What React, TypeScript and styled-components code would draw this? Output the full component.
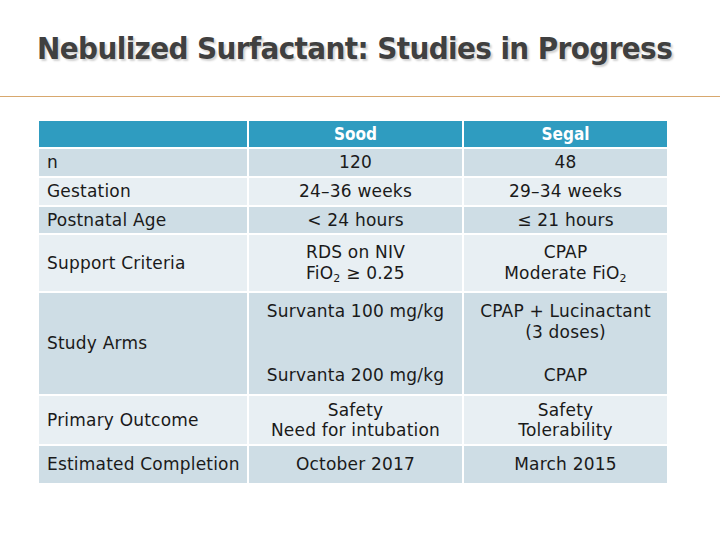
import React, { FC } from "react";
import styled, { createGlobalStyle } from "styled-components";

type Tone = "head" | "dark" | "light";

const GlobalStyle = createGlobalStyle`
  html, body {
    margin: 0;
    padding: 0;
    background: #ffffff;
  }
  body {
    font-family: "DejaVu Sans", "Liberation Sans", sans-serif;
    color: #1a1a1a;
  }
`;

const Page = styled.div`
  width: 720px;
  height: 540px;
  background: #ffffff;
  overflow: hidden;
`;

const Header = styled.div`
  height: 97px;
  box-sizing: border-box;
  border-bottom: 1px solid #d8a86e;
  padding: 29px 0 0 37px;
`;

const Title = styled.h1`
  margin: 0;
  font-family: "DejaVu Sans Condensed", "DejaVu Sans", sans-serif;
  font-stretch: condensed;
  font-weight: bold;
  font-size: 31px;
  line-height: 38px;
  letter-spacing: -0.6px;
  color: #404040;
  text-shadow: 2px 2px 2px rgba(0, 0, 0, 0.18);
  white-space: nowrap;
`;

const Table = styled.div`
  margin: 24px 0 0 39px;
  display: grid;
  grid-template-columns: 208px 213px 203px;
  grid-template-rows: 26px 27px 27px 26px 56px 101px 48px 37px;
  gap: 2px;
  font-size: 17px;
  letter-spacing: 0.2px;
`;

const tones: Record<Tone, string> = {
  head: "#2f9cc0",
  dark: "#cedde5",
  light: "#e8eff3",
};

const Cell = styled.div<{ $tone: Tone; $left?: boolean }>`
  background: ${(p) => tones[p.$tone]};
  display: flex;
  flex-direction: column;
  justify-content: center;
  align-items: ${(p) => (p.$left ? "flex-start" : "center")};
  text-align: ${(p) => (p.$left ? "left" : "center")};
  padding: 0 ${(p) => (p.$left ? "8px" : "0")};
  line-height: 21px;
  white-space: nowrap;
  color: #1a1a1a;
`;

const HeadCell = styled(Cell)`
  color: #ffffff;
  font-weight: bold;
  font-size: 17px;
  letter-spacing: 0;
  font-family: "DejaVu Sans Condensed", "DejaVu Sans", sans-serif;
  font-stretch: condensed;
`;

const ArmsCell = styled(Cell)`
  justify-content: space-between;
  padding: 8px 0 8px;
`;

const Line = styled.span<{ $tight?: boolean }>`
  display: block;
  line-height: ${(p) => (p.$tight ? "20px" : "21px")};
`;

const Sub = styled.sub`
  font-size: 11px;
  vertical-align: -3px;
  line-height: 0;
`;

const FiO2: FC = () => (
  <>
    FiO<Sub>2</Sub>
  </>
);

const rows: { label: string; tone: Tone; a: React.ReactNode; b: React.ReactNode }[] = [
  { label: "n", tone: "dark", a: "120", b: "48" },
  { label: "Gestation", tone: "light", a: "24–36 weeks", b: "29–34 weeks" },
  { label: "Postnatal Age", tone: "dark", a: "< 24 hours", b: "≤ 21 hours" },
];

const App: FC = () => {
  return (
    <Page>
      <GlobalStyle />
      <Header>
        <Title>Nebulized Surfactant: Studies in Progress</Title>
      </Header>
      <Table>
        <HeadCell $tone="head" />
        <HeadCell $tone="head">Sood</HeadCell>
        <HeadCell $tone="head">Segal</HeadCell>

        {rows.map((r) => (
          <React.Fragment key={r.label}>
            <Cell $tone={r.tone} $left>
              {r.label}
            </Cell>
            <Cell $tone={r.tone}>{r.a}</Cell>
            <Cell $tone={r.tone}>{r.b}</Cell>
          </React.Fragment>
        ))}

        <Cell $tone="light" $left>
          Support Criteria
        </Cell>
        <Cell $tone="light">
          <Line>RDS on NIV</Line>
          <Line>
            <FiO2 /> ≥ 0.25
          </Line>
        </Cell>
        <Cell $tone="light">
          <Line>CPAP</Line>
          <Line>
            Moderate <FiO2 />
          </Line>
        </Cell>

        <Cell $tone="dark" $left>
          Study Arms
        </Cell>
        <ArmsCell $tone="dark">
          <Line>Survanta 100 mg/kg</Line>
          <Line>Survanta 200 mg/kg</Line>
        </ArmsCell>
        <ArmsCell $tone="dark">
          <div>
            <Line>CPAP + Lucinactant</Line>
            <Line>(3 doses)</Line>
          </div>
          <Line>CPAP</Line>
        </ArmsCell>

        <Cell $tone="light" $left>
          Primary Outcome
        </Cell>
        <Cell $tone="light">
          <Line $tight>Safety</Line>
          <Line $tight>Need for intubation</Line>
        </Cell>
        <Cell $tone="light">
          <Line $tight>Safety</Line>
          <Line $tight>Tolerability</Line>
        </Cell>

        <Cell $tone="dark" $left>
          Estimated Completion
        </Cell>
        <Cell $tone="dark">October 2017</Cell>
        <Cell $tone="dark">March 2015</Cell>
      </Table>
    </Page>
  );
};

export default App;
